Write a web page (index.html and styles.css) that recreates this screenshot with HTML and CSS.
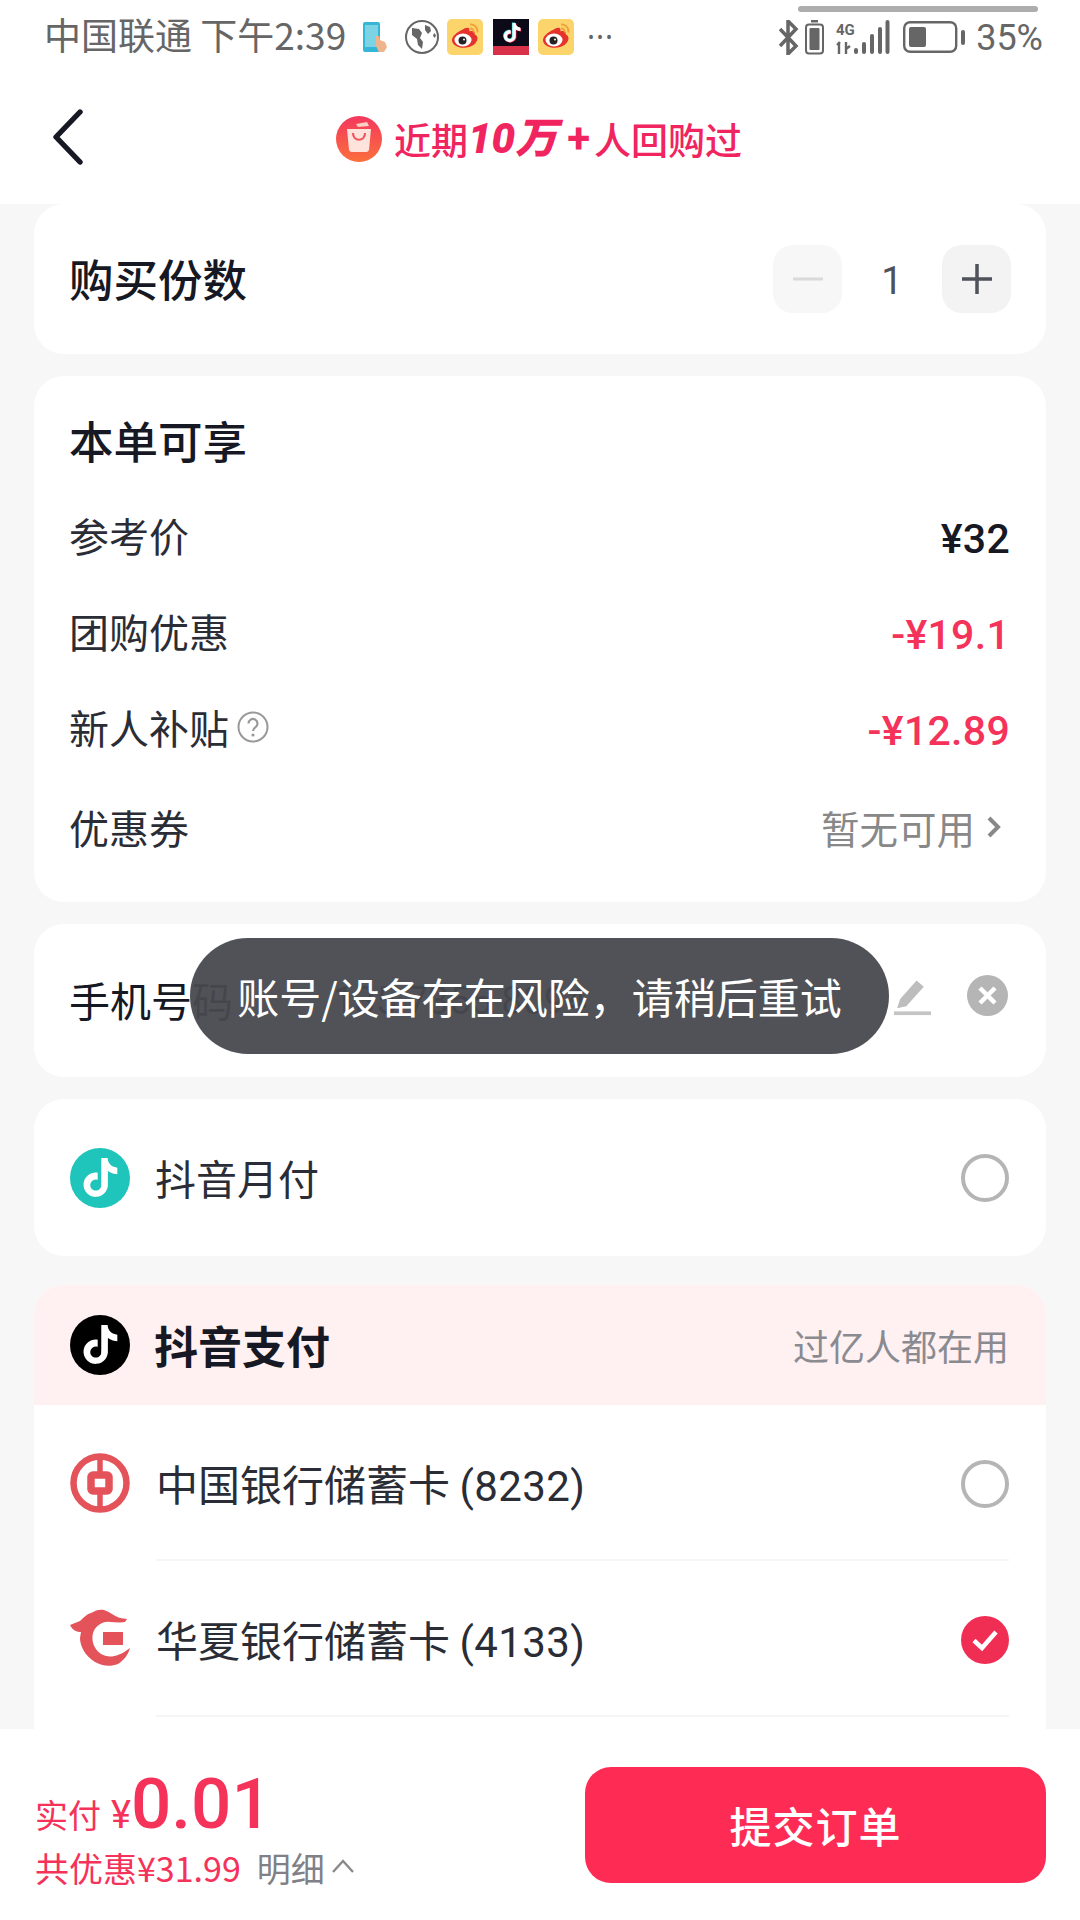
FILE: index.html
```html
<!DOCTYPE html>
<html lang="zh">
<head>
<meta charset="utf-8">
<title>提交订单</title>
<link rel="stylesheet" href="styles.css">
</head>
<body>
<svg class="defs" width="0" height="0" aria-hidden="true">
  <defs>
    <path id="note" d="M12.525.02c1.31-.02 2.61-.01 3.91-.02.08 1.53.63 3.09 1.75 4.17 1.12 1.11 2.7 1.62 4.24 1.79v4.03c-1.44-.05-2.89-.35-4.2-.97-.57-.26-1.1-.59-1.62-.93-.01 2.92.01 5.84-.02 8.75-.08 1.4-.54 2.79-1.35 3.94-1.31 1.92-3.58 3.17-5.91 3.21-1.43.08-2.86-.31-4.08-1.03-2.02-1.19-3.44-3.37-3.65-5.71-.02-.5-.03-1-.01-1.49.18-1.9 1.12-3.72 2.58-4.96 1.66-1.44 3.98-2.13 6.15-1.72.02 1.48-.04 2.96-.04 4.44-.99-.32-2.15-.23-3.02.37-.63.41-1.11 1.04-1.36 1.75-.21.51-.15 1.07-.14 1.61.24 1.64 1.82 3.02 3.5 2.87 1.12-.01 2.19-.66 2.77-1.61.19-.33.4-.67.41-1.06.1-1.79.06-3.57.07-5.36.01-4.03-.01-8.05.02-12.07z"/>
    <g id="weibo">
      <rect width="36" height="36" rx="5" fill="#fbd56b"/>
      <path d="M15 11c4-3 7-3 7.500-.5 0 1-.2 2 .5 1.800 3-1 5.500 0 4.500 3 2 1 3 2.500 3 4 0 5-6 9.500-13.500 9.500C10 28.800 5 25.500 5 21c0-3.500 5-8 10-10z" fill="#e6322c"/>
      <ellipse cx="16" cy="21" rx="8.500" ry="6.500" fill="#fff"/>
      <circle cx="15.500" cy="21.500" r="4" fill="#222"/>
      <circle cx="17" cy="20.500" r="1" fill="#fff"/>
      <path d="M23 5.500c4-.5 8 3 7.500 8M23 9.500c2-.2 4 1.500 3.700 4" fill="none" stroke="#f2a13a" stroke-width="1.800"/>
    </g>
  </defs>
</svg>
<div class="page">
  <div class="status">
    <div class="status-left">
      <span class="carrier">中国联通 下午2:39</span>
      <svg class="ic-phone" viewBox="0 0 26 30"><rect x="0" y="0" width="17" height="30" rx="2" fill="#35b6d6"/><rect x="2" y="3" width="13" height="22" fill="#7bd3e4"/><path d="M13 14l3 0 1 4 5 2 2 5-3 5h-5l-3-6z" fill="#efb48c"/></svg>
      <svg class="ic-globe" viewBox="0 0 36 36"><circle cx="18" cy="18" r="16" fill="none" stroke="#666" stroke-width="2"/><path d="M8 9l7 1 3 4-2 5 3 4-1 7-4-4-1-6-5-4zM21 6l5 2 1 4-3 3-3-4zM30 14l2 2-1 3-2-2z" fill="#666"/></svg>
      <svg class="ic-36" viewBox="0 0 36 36"><use href="#weibo"/></svg>
      <svg class="ic-36 ic-tk" viewBox="0 0 36 36"><rect width="36" height="36" fill="#0c0a18"/><rect y="27" width="36" height="9" fill="#d8314a"/><g transform="translate(9.500 4) scale(.8)"><use href="#note" fill="#29e0de" transform="translate(-.8 -.6)"/><use href="#note" fill="#fe2c55" transform="translate(.8 .6)"/><use href="#note" fill="#fff"/></g></svg>
      <svg class="ic-36 ic-wb2" viewBox="0 0 36 36"><use href="#weibo"/></svg>
      <span class="dots">···</span>
    </div>
    <div class="status-right">
      <svg class="ic-bt" viewBox="0 0 21 35"><path d="M1 9l16 17-8 8V1l8 8L1 26" fill="none" stroke="#666" stroke-width="3.500"/></svg>
      <svg class="ic-vib" viewBox="0 0 19 35"><rect x="6" y="0" width="7" height="2.500" fill="#666"/><rect x="1" y="4.500" width="17" height="29" rx="3" fill="none" stroke="#666" stroke-width="2"/><rect x="4.500" y="8" width="10" height="22" rx="1" fill="#666"/></svg>
      <svg class="ic-sig" viewBox="0 0 54 35"><text class="sig-4g" x="0" y="15">4G</text><path d="M3 22v12M1 25l3-3M10 22v12M10 29l4-3" fill="none" stroke="#666" stroke-width="2.400"/><g fill="#666"><rect x="18" y="28" width="4" height="6" rx="2"/><rect x="26" y="22" width="4" height="12" rx="2"/><rect x="34" y="14" width="4" height="20" rx="2"/><rect x="42" y="7" width="4" height="27" rx="2"/><rect x="49.500" y="0" width="4" height="34" rx="2"/></g></svg>
      <svg class="ic-bat" viewBox="0 0 63 32"><rect x="1.200" y="1.200" width="52" height="29.600" rx="6" fill="none" stroke="#666" stroke-width="2.400"/><rect x="6" y="6" width="17" height="20" rx="2" fill="#666"/><rect x="58" y="9" width="4" height="15" rx="2" fill="#666"/></svg>
      <span class="pct">35%</span>
    </div>
    <div class="top-indicator"></div>
  </div>

  <header class="nav">
    <svg class="back" viewBox="0 0 30 56"><path d="M27 3L3 28l24 25" fill="none" stroke="#161823" stroke-width="5.400" stroke-linecap="round" stroke-linejoin="round"/></svg>
    <div class="nav-title">
      <svg class="bag" viewBox="0 0 46 46"><defs><linearGradient id="bagg" x1="0" y1="0" x2="0" y2="1"><stop offset="0" stop-color="#f4385e"/><stop offset="1" stop-color="#fb6f3d"/></linearGradient></defs><circle cx="23" cy="23" r="23" fill="url(#bagg)"/><path d="M20 8l11-2 2 4-11 1z" fill="#fbd0c4"/><path d="M11 13h24l-2 21a3 3 0 0 1-3 2H16a3 3 0 0 1-3-2z" fill="#fde3dc"/><path d="M17 17c0 9 12 9 12 0" fill="none" stroke="#f2555a" stroke-width="2.200"/></svg>
      <span class="t-cn">近期</span><span class="t-big">10万</span><span class="t-plus">+</span><span class="t-cn">人回购过</span>
    </div>
  </header>

  <main class="content">
    <section class="card qty">
      <h2 class="title">购买份数</h2>
      <div class="stepper">
        <span class="step step-off"><svg viewBox="0 0 32 32"><path d="M1 16h30" stroke="#d8d9db" stroke-width="3"/></svg></span>
        <span class="step-num">1</span>
        <span class="step"><svg viewBox="0 0 32 32"><path d="M1 16h30M16 1v30" stroke="#505259" stroke-width="3.500"/></svg></span>
      </div>
    </section>

    <section class="card bill">
      <h2 class="title bill-title">本单可享</h2>
      <div class="bill-row"><span class="bill-label">参考价</span><span class="num">¥32</span></div>
      <div class="bill-row"><span class="bill-label">团购优惠</span><span class="num red">-¥19.1</span></div>
      <div class="bill-row"><span class="bill-label with-ic">新人补贴<svg class="help" viewBox="0 0 32 32"><circle cx="16" cy="16" r="14.500" fill="none" stroke="#999" stroke-width="2"/><path d="M11.500 12.500a4.500 4.500 0 1 1 7 3.700c-1.500 1-2.500 1.800-2.500 3.800" fill="none" stroke="#999" stroke-width="2.200"/><circle cx="16" cy="24" r="1.600" fill="#999"/></svg></span><span class="num red">-¥12.89</span></div>
      <div class="bill-row bill-last"><span class="bill-label">优惠券</span><span class="bill-label gray with-ic">暂无可用<svg class="chev" viewBox="0 0 16 24"><path d="M3 3l9 9-9 9" fill="none" stroke="#888" stroke-width="4"/></svg></span></div>
    </section>

    <section class="card phone">
      <span class="label">手机号码</span>
      <span class="phone-num">135 7355 8094</span>
      <svg class="pencil" viewBox="0 0 36 38"><path d="M22 3l7 6-17 19-9 2 3-9z" fill="#bdbdbd"/><rect x="0" y="33" width="36" height="3.600" fill="#c4c4c4"/></svg>
      <svg class="clear" viewBox="0 0 41 41"><circle cx="20.500" cy="20.500" r="20.500" fill="#b5b5b5"/><path d="M13 13l15 15M28 13L13 28" stroke="#fff" stroke-width="4.500"/></svg>
    </section>

    <section class="card pay-single">
      <svg class="pay-ic" viewBox="0 0 60 60"><circle cx="30" cy="30" r="30" fill="#1fc4bb"/><g transform="translate(11 10) scale(1.620)"><use href="#note" fill="#fff"/></g></svg>
      <span class="pay-name">抖音月付</span>
      <span class="radio"></span>
    </section>

    <section class="card pay-group">
      <div class="pay-head">
        <svg class="pay-ic" viewBox="0 0 60 60"><circle cx="30" cy="30" r="30" fill="#000"/><g transform="translate(11 10) scale(1.620)"><use href="#note" fill="#fff"/></g></svg>
        <span class="pay-head-name">抖音支付</span>
        <span class="pay-head-note">过亿人都在用</span>
      </div>
      <div class="bank">
        <svg class="pay-ic" viewBox="0 0 60 60"><circle cx="30" cy="30" r="26.500" fill="none" stroke="#e4525a" stroke-width="6.500"/><rect x="21" y="22" width="18" height="16" rx="2" fill="none" stroke="#e4525a" stroke-width="7.500"/><path d="M30 4v16M30 40v16" stroke="#e4525a" stroke-width="5.500"/></svg>
        <div class="bank-body"><span class="bank-name">中国银行储蓄卡 <span class="card-no">(8232)</span></span><span class="radio"></span></div>
      </div>
      <div class="bank">
        <svg class="pay-ic" viewBox="0 0 60 60"><path d="M0 16L10 12C14 8 17 5 21 4 26 1 30 0 34 1 40 3 44 7 50 9L57 10 55 13C50 14 45 13 40 13 33 12 26 16 23 24 21 32 24 40 31 45 38 49 47 49 60 39 58 46 54 51 48 55 40 58 32 57 25 53 15 47 10 37 10 29L11 23C7 23 3 22 0 16Z" fill="#e4525a"/><rect x="33" y="23" width="20" height="13" fill="#e4525a"/></svg>
        <div class="bank-body"><span class="bank-name">华夏银行储蓄卡 <span class="card-no">(4133)</span></span><svg class="check" viewBox="0 0 48 48"><circle cx="24" cy="24" r="24" fill="#f02d52"/><path d="M13 24.500l8 7.500 14-16" fill="none" stroke="#fff" stroke-width="4.500"/></svg></div>
      </div>
    </section>
  </main>

  <footer class="bottom">
    <div class="sum">
      <div class="sum-top"><span class="sum-label">实付</span><span class="sum-cur">¥</span><span class="sum-amt">0.01</span></div>
      <div class="sum-sub"><span class="red">共优惠¥31.99</span><span class="detail">明细</span><svg class="up" viewBox="0 0 24 16"><path d="M2 14L12 3l10 11" fill="none" stroke="#8a8a8a" stroke-width="2.400"/></svg></div>
    </div>
    <button class="submit" type="button">提交订单</button>
  </footer>

  <div class="toast">账号/设备存在风险&#xFF0C;请稍后重试</div>
</div>
</body>
</html>
```

FILE: styles.css
```css
* { box-sizing: border-box; }
html, body { margin: 0; padding: 0; }
body {
  width: 1080px;
  height: 1920px;
  overflow: hidden;
  font-family: "Noto Sans CJK SC", "Noto Sans", sans-serif;
  color: #161823;
  background: #f7f7f8;
}
.defs { position: absolute; }
.page {
  position: relative;
  width: 1080px;
  height: 1920px;
  display: flex;
  flex-direction: column;
  overflow: hidden;
}

/* status bar */
.status {
  position: relative;
  height: 74px;
  flex: none;
  background: #fff;
  display: flex;
  justify-content: space-between;
  align-items: center;
  padding: 0 37px 0 44px;
  color: #666;
}
.status-left, .status-right { display: flex; align-items: center; }
.carrier { font-size: 37px; line-height: 1; font-family: "Noto Sans CJK SC", sans-serif; white-space: nowrap; width: 319px; margin-bottom: 6px; }
.ic-phone { width: 26px; height: 30px; }
.ic-globe { width: 36px; height: 36px; margin-left: 15px; }
.ic-36 { width: 36px; height: 36px; margin-left: 7px; }
.ic-tk { margin-left: 10px; }
.ic-wb2 { margin-left: 9px; }
.dots { font-size: 30px; line-height: 1; margin-left: 13px; font-family: "Noto Sans", sans-serif; letter-spacing: 1px; }
.ic-bt { width: 21px; height: 35px; }
.ic-vib { width: 19px; height: 35px; margin-left: 5px; }
.ic-sig { width: 54px; height: 35px; margin-left: 12px; }
.sig-4g { font: 700 15px "Roboto", sans-serif; fill: #666; }
.ic-bat { width: 63px; height: 32px; margin-left: 13px; }
.pct { font-family: "Roboto", sans-serif; font-size: 36px; line-height: 1; margin-left: 10px; margin-top: 2px; color: #666; }
.top-indicator {
  position: absolute;
  left: 798px;
  top: 6px;
  width: 240px;
  height: 6px;
  border-radius: 3px;
  background: #adadad;
}

/* nav */
.nav {
  height: 130px;
  flex: none;
  background: #fff;
  display: flex;
  align-items: center;
  position: relative;
  padding: 0 0 0 53px;
}
.back { width: 30px; height: 56px; flex: none; margin-bottom: 4px; }
.nav-title {
  display: flex;
  align-items: center;
  margin-left: 253px;
  color: #f0245f;
  line-height: 1;
}
.bag { width: 46px; height: 46px; margin-right: 12px; flex: none; }
.t-cn { font-size: 37px; font-weight: 500; }
.t-big { font-size: 42px; font-weight: 900; font-style: italic; font-family: "Roboto", "Noto Sans CJK SC", sans-serif; }
.t-plus { font-size: 42px; font-weight: 700; margin: 0 4px 0 10px; font-family: "Roboto", sans-serif; }

/* content */
.content {
  flex: 1;
  min-height: 0;
  overflow: hidden;
  padding: 0 34px;
  display: flex;
  flex-direction: column;
  gap: 22px;
}
.card { background: #fff; border-radius: 30px; flex: none; }
.title { margin: 0; font-size: 44.500px; font-weight: 500; line-height: 1; color: #161823; }

.qty {
  height: 150px;
  display: flex;
  align-items: center;
  justify-content: space-between;
  padding: 0 35px;
}
.qty .title { margin-bottom: 2px; }
.stepper { display: flex; align-items: center; }
.step {
  width: 69px;
  height: 68px;
  border-radius: 20px;
  background: #f3f3f4;
  display: flex;
  align-items: center;
  justify-content: center;
}
.step svg { width: 32px; height: 32px; }
.step-off { background: #f7f7f8; }
.step-num {
  width: 100px;
  text-align: center;
  font-size: 38px;
  font-family: "Roboto", sans-serif;
  color: #505259;
  line-height: 1;
  margin-top: 3px;
}

.bill { height: 526px; padding: 40px 36px 0 35px; }
.bill-title { margin-bottom: 27px; height: 48px; line-height: 48px; }
.bill-row {
  height: 96px;
  display: flex;
  align-items: center;
  justify-content: space-between;
  font-size: 40px;
  line-height: 1;
  color: #2b2d36;
}
.bill-label { margin-bottom: 8px; }
.bill-last { height: 104px; }
.num { font-family: "Roboto", sans-serif; font-size: 41px; font-weight: 500; color: #161823; letter-spacing: .3px; }
.red { color: #f5325a; }
.num.red { color: #f5325a; }
.gray { color: #888; font-size: 38.500px; }
.with-ic { display: flex; align-items: center; }
.help { width: 32px; height: 32px; margin-left: 8px; }
.chev { width: 16px; height: 24px; margin-left: 11px; margin-right: 8px; }

.phone {
  height: 153px;
  display: flex;
  align-items: center;
  padding: 0 38px 0 35px;
}
.label { font-size: 41px; line-height: 1; color: #161823; margin-bottom: 2px; }
.phone-num { font-size: 38px; font-family: "Roboto", sans-serif; color: #161823; margin-left: 100px; line-height: 1; white-space: nowrap; }
.pencil { width: 37px; height: 40px; margin-left: auto; margin-top: -8px; }
.clear { width: 41px; height: 41px; margin-left: 36px; margin-top: -10px; }

.pay-single {
  height: 157px;
  display: flex;
  align-items: center;
  padding: 0 37px 0 36px;
}
.pay-ic { width: 60px; height: 60px; flex: none; }
.pay-name { font-size: 41px; line-height: 1; color: #2b2d36; white-space: nowrap; }
.pay-single .pay-name { margin-left: 25px; }
.radio {
  width: 48px;
  height: 48px;
  border-radius: 50%;
  border: 4px solid #b5b5b5;
  margin-left: auto;
  flex: none;
}
.pay-group {
  margin-top: 7px;
  overflow: hidden;
  flex: 1;
  min-height: 0;
  border-radius: 30px 30px 0 0;
}
.pay-head {
  height: 120px;
  background: #fff0f1;
  display: flex;
  align-items: center;
  padding: 0 37px 0 36px;
}
.pay-head-name { font-size: 44px; font-weight: 700; margin-left: 24px; line-height: 1; }
.pay-head-note { font-size: 36px; color: #8a8b91; margin-left: auto; line-height: 1; }
.bank {
  display: flex;
  align-items: center;
  padding: 0 37px 0 36px;
  gap: 26px;
}
.bank-body {
  flex: 1;
  height: 156px;
  padding-top: 4px;
  display: flex;
  align-items: center;
  justify-content: space-between;
  border-bottom: 2px solid #f5f5f6;
}
.bank-name { font-size: 42px; line-height: 1; color: #2b2d36; white-space: nowrap; margin-top: 2px; }
.card-no { letter-spacing: .4px; font-family: "Roboto", sans-serif; }
.check { width: 48px; height: 48px; flex: none; }

/* bottom */
.bottom {
  height: 191px;
  flex: none;
  background: #fff;
  display: flex;
  align-items: center;
  justify-content: space-between;
  padding: 0 34px 0 35px;
  position: relative;
}
.sum { display: flex; flex-direction: column; }
.sum-top { display: flex; align-items: baseline; color: #f5325a; height: 80px; padding-top: 4px; }
.sum-label { font-size: 33px; line-height: 1; font-weight: 400; }
.sum-cur { font-size: 38px; line-height: 1; font-family: "Roboto", sans-serif; margin-left: 10px; }
.sum-amt { font-family: "Roboto", sans-serif; font-size: 71px; line-height: 1; font-weight: 500; }
.sum-sub { display: flex; align-items: center; font-size: 34px; line-height: 1; margin-top: 7px; }
.detail { color: #808086; margin-left: 16px; }
.up { width: 24px; height: 16px; margin-left: 6px; margin-top: -4px; }
.submit {
  width: 461px;
  height: 116px;
  border: 0;
  border-radius: 26px;
  background: #fe2c55;
  color: #fff;
  font: 500 42px "Noto Sans CJK SC", sans-serif;
  letter-spacing: 1px;
}

/* toast */
.toast {
  position: absolute;
  left: 190px;
  top: 938px;
  width: 699px;
  height: 116px;
  border-radius: 58px;
  background: rgba(72, 73, 79, .95);
  color: #fff;
  font-size: 42px;
  line-height: 116px;
  text-align: center;
  white-space: nowrap;
}
```
